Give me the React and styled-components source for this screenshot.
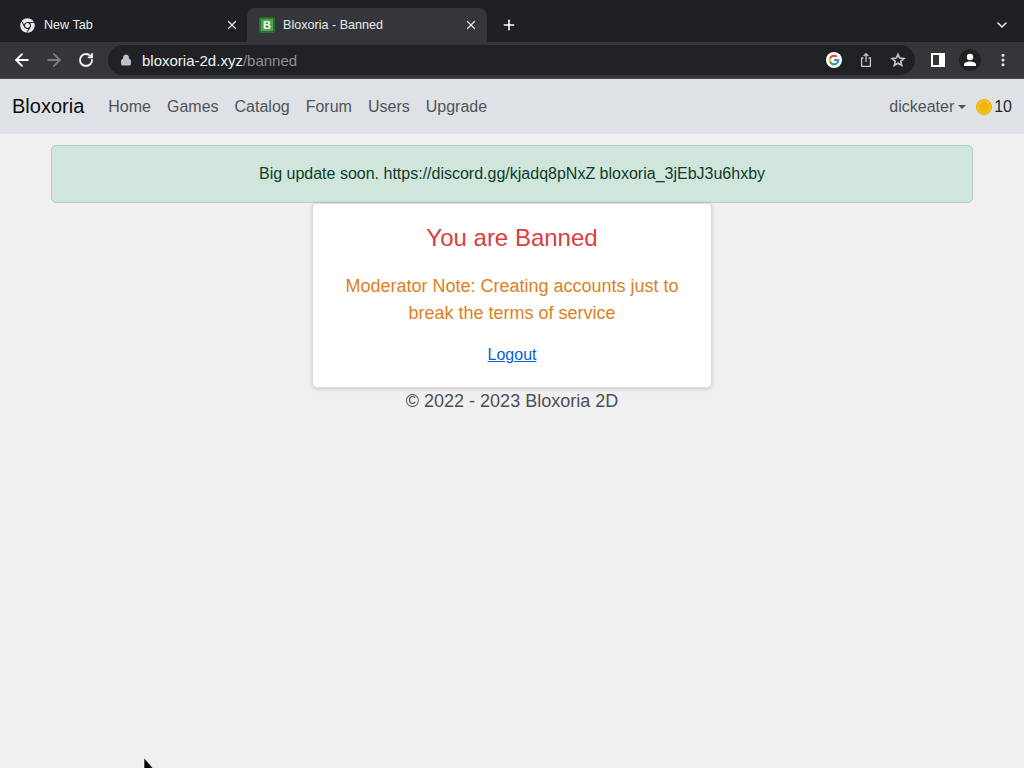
import React from "react";
import styled, { createGlobalStyle } from "styled-components";
import { X, Plus, ArrowLeft, ArrowRight, RotateCw, Lock, ChevronDown, MoreVertical } from "lucide-react";
import { FaChrome } from "react-icons/fa";

const Global = createGlobalStyle`
  html, body { margin: 0; padding: 0; height: 100%; }
  body { background: #f0f0f0; font-family: "Liberation Sans", Arial, sans-serif; overflow: hidden; }
  #root { height: 100%; }
`;

const Page = styled.div`
  position: relative;
  width: 1024px;
  height: 768px;
  overflow: hidden;
`;

const TabStrip = styled.div`
  height: 42px;
  background: #1f2025;
  display: flex;
  align-items: flex-end;
  color: #e8eaed;
  font-size: 12.6px;
`;

const Tab = styled.div`
  height: 34px;
  box-sizing: border-box;
  padding: 0 ${p => (p.$active ? "9px" : "8px")} 0 ${p => (p.$active ? "12px" : "20px")};
  width: ${p => (p.$active ? "240px" : "247px")};
  display: flex;
  align-items: center;
  background: ${p => (p.$active ? "#35363a" : "transparent")};
  border-radius: 8px 8px 0 0;
  svg.close { margin-left: auto; }
`;

const TabTitle = styled.span`
  margin-left: ${p => (p.$active ? "8px" : "9px")};
`;

const Favicon = styled.span`
  width: 16px;
  height: 16px;
  box-sizing: border-box;
  border-radius: 2px;
  background: #4fa34c;
  border: 2px solid #2f6e30;
  color: #f2fbef;
  font-weight: 700;
  font-size: 11px;
  display: flex;
  align-items: center;
  justify-content: center;
`;

const NewTab = styled.div`
  margin-left: 14px;
  height: 34px;
  display: flex;
  align-items: center;
`;

const StripEnd = styled.div`
  margin-left: auto;
  margin-right: 14px;
  height: 34px;
  display: flex;
  align-items: center;
`;

const Toolbar = styled.div`
  height: 36px;
  background: #35363a;
  border-bottom: 1px solid #4a4b4e;
  display: flex;
  align-items: center;
  padding-left: 12px;
`;

const NavIcons = styled.div`
  display: flex;
  align-items: center;
  gap: 12px;
  width: 96px;
  flex: none;
  svg:last-child { margin-left: 2px; }
`;

const Omnibox = styled.div`
  width: 807px;
  height: 30px;
  border-radius: 15px;
  background: #202124;
  display: flex;
  align-items: center;
  padding: 0 9px 0 12px;
  box-sizing: border-box;
  font-size: 15px;
`;

const Host = styled.span`
  color: #f1f3f4;
  margin-left: 10px;
`;

const PathPart = styled.span`
  color: #8e9196;
`;

const OmniIcons = styled.div`
  margin-left: auto;
  display: flex;
  align-items: center;
  gap: 16px;
`;

const ToolIcons = styled.div`
  display: flex;
  align-items: center;
  margin-left: 16px;
  gap: 14px;
`;

const SidePanel = styled.span`
  width: 14px;
  height: 14px;
  box-sizing: border-box;
  border: 2px solid #fff;
  border-right-width: 6px;
  background: #35363a;
`;

const Avatar = styled.span`
  width: 22px;
  height: 22px;
  border-radius: 50%;
  background: #202124;
  display: flex;
  align-items: center;
  justify-content: center;
`;

const Navbar = styled.nav`
  height: 55px;
  background: #dee2e6;
  display: flex;
  align-items: center;
  padding: 0 12px;
  font-size: 16px;
  color: #4f5356;
`;

const Brand = styled.span`
  font-size: 20px;
  color: #0d0d0d;
  margin-right: 24px;
`;

const NavLinks = styled.div`
  display: flex;
  gap: 16px;
`;

const NavRight = styled.div`
  margin-left: auto;
  display: flex;
  align-items: center;
`;

const Caret = styled.span`
  width: 0;
  height: 0;
  margin-left: 4px;
  border-top: 4px solid #4f5356;
  border-left: 4px solid transparent;
  border-right: 4px solid transparent;
`;

const Coin = styled.span`
  width: 16px;
  height: 16px;
  box-sizing: border-box;
  margin: 1px 2px 0 10px;
  border-radius: 50%;
  background: radial-gradient(circle, #eeb70a 0 45%, #fac915 60%);
  border: 1px solid #eaa706;
`;

const Balance = styled.span`
  color: #212529;
`;

const Main = styled.main`
  padding-top: 11px;
  display: flex;
  flex-direction: column;
  align-items: center;
`;

const Alert = styled.div`
  width: 922px;
  height: 58px;
  box-sizing: border-box;
  background: #d0e6dc;
  border: 1px solid #b0cfc0;
  border-radius: 5px;
  color: #0f3b28;
  font-size: 16px;
  display: flex;
  align-items: center;
  justify-content: center;
`;

const Card = styled.section`
  width: 400px;
  height: 185px;
  box-sizing: border-box;
  background: #fff;
  border: 1px solid #dcdcdc;
  border-radius: 5px;
  box-shadow: 0 1px 4px rgba(0, 0, 0, 0.16);
  padding: 18px 24px 0;
  text-align: center;
`;

const Heading = styled.h1`
  margin: 0;
  font-size: 24px;
  font-weight: 400;
  line-height: 32px;
  color: #d9403f;
`;

const Note = styled.p`
  margin: 19px 0 0;
  font-size: 18px;
  line-height: 27px;
  color: #dd7f22;
`;

const Logout = styled.a`
  display: block;
  margin-top: 16px;
  font-size: 16px;
  line-height: 24px;
  color: #0b5ed7;
  text-decoration: underline;
`;

const Footer = styled.footer`
  font-size: 18px;
  line-height: 27px;
  color: #4d4f52;
`;

const Cursor = styled.svg`
  position: absolute;
  left: 143px;
  top: 758px;
`;

const GoogleIcon = () => (
  <svg width="16" height="16" viewBox="0 0 16 16">
    <circle cx="8" cy="8" r="8" fill="#fff" />
    <path d="M13.3 8.1c0-.4 0-.7-.1-1H8v2h3a2.6 2.6 0 0 1-1.1 1.6l1.7 1.3c1-.9 1.7-2.3 1.7-3.9z" fill="#4285f4" />
    <path d="M8 13.4c1.4 0 2.7-.5 3.6-1.3l-1.7-1.3c-.5.3-1.1.5-1.9.5-1.4 0-2.6-1-3-2.2L3.2 9.9A5.4 5.4 0 0 0 8 13.4z" fill="#34a853" />
    <path d="M5 9.1a3.2 3.2 0 0 1 0-2.1L3.2 5.6a5.4 5.4 0 0 0 0 4.8z" fill="#fbbc05" />
    <path d="M8 4.8c.8 0 1.5.3 2 .8l1.5-1.5A5.2 5.2 0 0 0 8 2.7a5.4 5.4 0 0 0-4.8 2.9L5 7c.4-1.3 1.6-2.2 3-2.2z" fill="#ea4335" />
  </svg>
);

const ShareIcon = () => (
  <svg width="16" height="16" viewBox="0 0 16 16" fill="none" stroke="#c4c7ca" strokeWidth="1.3">
    <path d="M5.5 6H3.6v8.4h8.8V6h-1.9" />
    <path d="M8 10V1.8M5.6 4 8 1.6 10.4 4" />
  </svg>
);

const StarIcon = () => (
  <svg width="16" height="16" viewBox="0 0 16 16" fill="none" stroke="#c4c7ca" strokeWidth="1.6" strokeLinejoin="miter">
    <path d="M8 2.2l1.7 3.9 4.2.4-3.2 2.8 1 4.1L8 11.2l-3.7 2.2 1-4.1-3.2-2.8 4.2-.4z" />
  </svg>
);

const BustIcon = () => (
  <svg width="16" height="16" viewBox="0 0 16 16" fill="#fff">
    <circle cx="8" cy="5" r="3.2" />
    <path d="M2 14v-1.5C2 10.5 5.3 9.5 8 9.5s6 1 6 3V14z" />
  </svg>
);

export default function App() {
  return (
    <Page>
      <Global />
      <TabStrip>
        <Tab>
          <FaChrome size={15} color="#e8eaed" />
          <TabTitle>New Tab</TabTitle>
          <X className="close" size={14} color="#e8eaed" strokeWidth={2.2} />
        </Tab>
        <Tab $active>
          <Favicon>B</Favicon>
          <TabTitle $active>Bloxoria - Banned</TabTitle>
          <X className="close" size={14} color="#e8eaed" strokeWidth={2.2} />
        </Tab>
        <NewTab>
          <Plus size={16} color="#fff" strokeWidth={2.4} />
        </NewTab>
        <StripEnd>
          <ChevronDown size={16} color="#e8eaed" strokeWidth={2.4} />
        </StripEnd>
      </TabStrip>
      <Toolbar>
        <NavIcons>
          <ArrowLeft size={20} color="#fff" strokeWidth={2.2} />
          <ArrowRight size={20} color="#7c7d80" strokeWidth={2.2} />
          <RotateCw size={16} color="#f1f3f4" strokeWidth={2.8} />
        </NavIcons>
        <Omnibox>
          <Lock size={12} color="#bdc1c6" fill="#bdc1c6" />
          <Host>
            bloxoria-2d.xyz<PathPart>/banned</PathPart>
          </Host>
          <OmniIcons>
            <GoogleIcon />
            <ShareIcon />
            <StarIcon />
          </OmniIcons>
        </Omnibox>
        <ToolIcons>
          <SidePanel />
          <Avatar>
            <BustIcon />
          </Avatar>
          <MoreVertical size={16} color="#e8eaed" strokeWidth={2.6} />
        </ToolIcons>
      </Toolbar>
      <Navbar>
        <Brand>Bloxoria</Brand>
        <NavLinks>
          <span>Home</span>
          <span>Games</span>
          <span>Catalog</span>
          <span>Forum</span>
          <span>Users</span>
          <span>Upgrade</span>
        </NavLinks>
        <NavRight>
          <span>dickeater</span>
          <Caret />
          <Coin />
          <Balance>10</Balance>
        </NavRight>
      </Navbar>
      <Main>
        <Alert>Big update soon. https://discord.gg/kjadq8pNxZ bloxoria_3jEbJ3u6hxby</Alert>
        <Card>
          <Heading>You are Banned</Heading>
          <Note>Moderator Note: Creating accounts just to break the terms of service</Note>
          <Logout href="#">Logout</Logout>
        </Card>
        <Footer>© 2022 - 2023 Bloxoria 2D</Footer>
      </Main>
      <Cursor width="14" height="14" viewBox="0 0 14 14">
        <path d="M1 0 L1 14 L4 11 L10 10 Z" fill="#000" stroke="#fff" strokeWidth="0.6" />
      </Cursor>
    </Page>
  );
}
